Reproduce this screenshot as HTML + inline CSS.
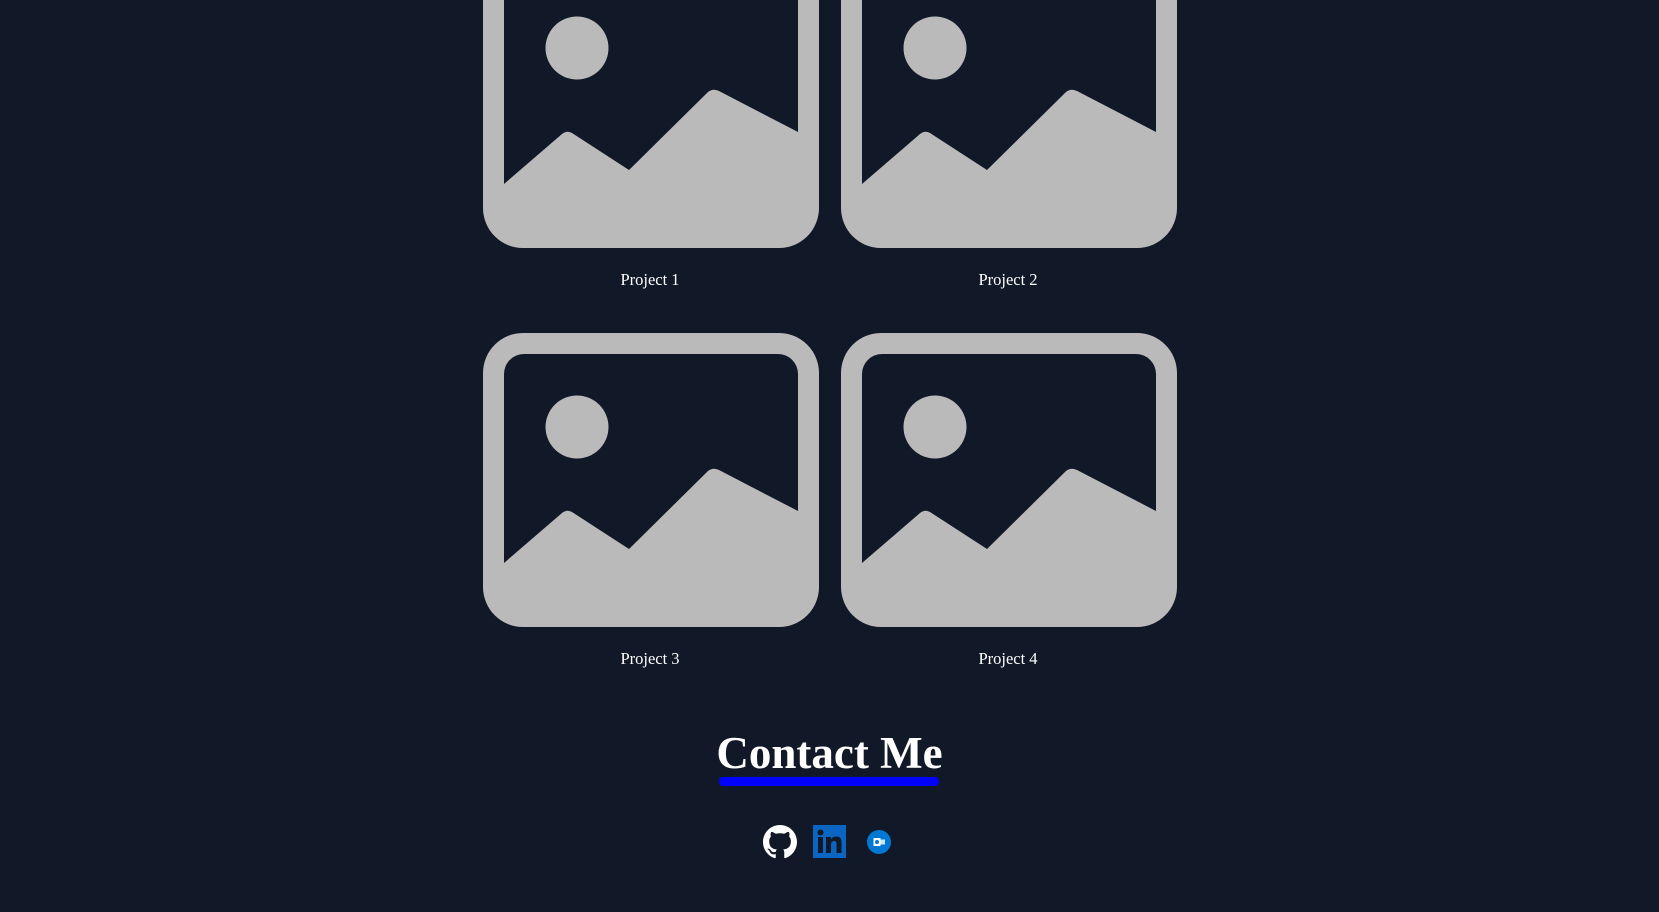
<!DOCTYPE html>
<html><head><style>
html,body{margin:0;padding:0;background:#111827;width:1659px;height:912px;overflow:hidden;position:relative;font-family:"Liberation Serif",serif;color:#fff}
.img{position:absolute;width:336px;height:294px}
.cap{position:absolute;width:336px;text-align:center;font-size:16.5px}
h2{position:absolute;left:0;width:1659px;text-align:center;top:727px;margin:0;font-size:45px;font-weight:bold;line-height:52px}
.bar{position:absolute;left:719px;top:777px;width:220px;height:9px;background:#0000ff;border-radius:4px}
</style></head><body>
<svg width="0" height="0" style="position:absolute"><defs><g id="pic">
<path fill-rule="evenodd" fill="#bababa" d="M40 0H296A40 40 0 0 1 336 40V254A40 40 0 0 1 296 294H40A40 40 0 0 1 0 254V40A40 40 0 0 1 40 0ZM41 21A20 20 0 0 0 21 41V230L79 180Q84 176 89 179L146 216L225 138Q230 134 236 137L315 178V41A20 20 0 0 0 295 21Z"/>
<circle cx="94" cy="94" r="31.5" fill="#bababa"/></g></defs></svg>
<svg class="img" style="left:483px;top:-46px"><use href="#pic"/></svg>
<svg class="img" style="left:841px;top:-46px"><use href="#pic"/></svg>
<svg class="img" style="left:483px;top:333px"><use href="#pic"/></svg>
<svg class="img" style="left:841px;top:333px"><use href="#pic"/></svg>
<div class="cap" style="left:482px;top:270px">Project 1</div>
<div class="cap" style="left:840px;top:270px">Project 2</div>
<div class="cap" style="left:482px;top:649px">Project 3</div>
<div class="cap" style="left:840px;top:649px">Project 4</div>
<h2>Contact Me</h2>
<div class="bar"></div>
<svg style="position:absolute;left:763px;top:825px" width="34" height="34" viewBox="0 0 16 16"><path fill="#fff" d="M8 0C3.58 0 0 3.580 0 8c0 3.54 2.29 6.530 5.47 7.59.4.07.55-.17.55-.38 0-.19-.01-.82-.01-1.49-2.01.37-2.53-.49-2.69-.94-.09-.23-.48-.94-.82-1.13-.28-.15-.68-.52-.01-.53.63-.01 1.08.58 1.23.82.72 1.21 1.87.87 2.33.66.07-.52.28-.87.51-1.07-1.780-.2-3.64-.89-3.64-3.95 0-.87.31-1.59.82-2.150-.08-.2-.36-1.02.08-2.12 0 0 .67-.21 2.2.82.64-.18 1.32-.27 2-.27.68 0 1.36.09 2 .27 1.53-1.04 2.2-.82 2.2-.82.44 1.1.16 1.92.08 2.12.51.56.82 1.27.82 2.15 0 3.07-1.87 3.75-3.65 3.95.29.25.54.73.54 1.48 0 1.07-.01 1.93-.01 2.2 0 .21.15.46.55.38A8.013 8.013 0 0016 8c0-4.42-3.58-8-8-8z"/></svg>
<svg style="position:absolute;left:813px;top:825px" width="33" height="33" viewBox="0 0 33 33"><rect width="33" height="33" fill="#0a66c2"/><rect x="5" y="12" width="5" height="16" fill="#111827"/><circle cx="7.5" cy="7.5" r="3" fill="#111827"/><path fill="#111827" d="M13 12h5v2.5c1-2 3-3 5.5-3 4 0 5 2.5 5 6V28h-5v-9c0-2-.6-3-2.3-3-1.9 0-3.2 1.2-3.2 3.5V28h-5z"/></svg>
<svg style="position:absolute;left:867px;top:830px" width="24" height="24" viewBox="0 0 24 24"><circle cx="12" cy="12" r="12" fill="#0078d4"/><rect x="6.5" y="8" width="7" height="8" fill="#fff"/><rect x="13" y="9.5" width="5" height="5" fill="#fff" opacity=".8"/><circle cx="10" cy="12" r="2" fill="#0078d4"/></svg>
</body></html>
